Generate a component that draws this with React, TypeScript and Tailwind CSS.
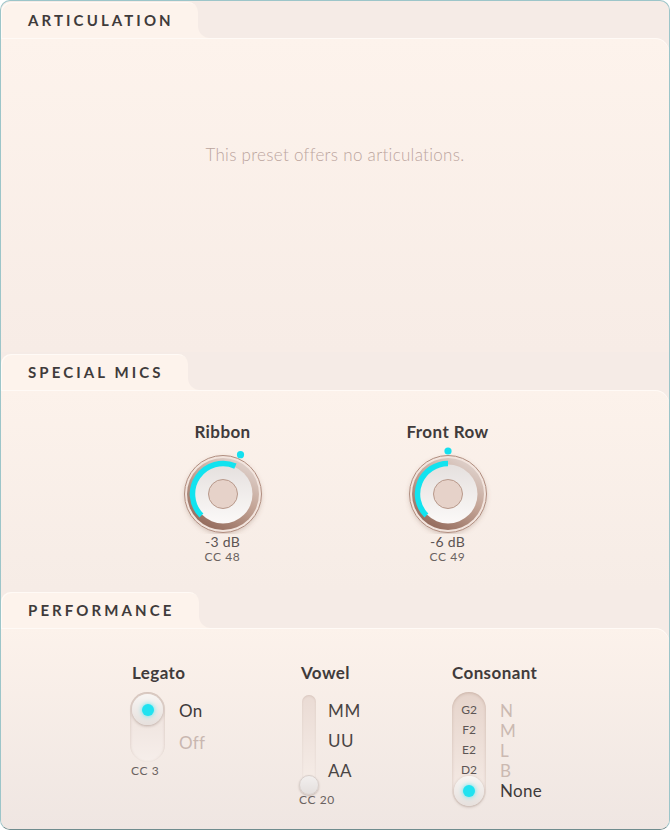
import { useId } from 'react';

const FONT = "font-['Lato',_'Noto_Sans',_sans-serif]";

function Tab({ title }: { title: string }) {
  return (
    <div className="flex items-end">
      <div className="h-[36px] rounded-t-[10px] bg-[#fdf3ec] pl-[27px] pr-[24px] flex items-center shadow-[inset_1px_1px_0_#fffaf6]">
        <span className="text-[15px] font-bold tracking-[3.1px] text-[#3f3b3b] uppercase leading-none">{title}</span>
      </div>
      <div className="w-[12px] h-[12px] bg-[#fdf3ec]">
        <div className="w-full h-full rounded-bl-[12px] bg-[#f5ebe6]" />
      </div>
    </div>
  );
}

function Knob({ label, value, cc, angle }: { label: string; value: string; cc: string; angle: number }) {
  const id = useId().replace(/:/g, '');
  const r = 30.5;
  const a0 = (-135 * Math.PI) / 180;
  const a1 = (angle * Math.PI) / 180;
  const p = (a: number, rr: number) => [rr * Math.sin(a), -rr * Math.cos(a)];
  const [sx, sy] = p(a0, r);
  const [ex, ey] = p(a1, r);
  const large = angle + 135 > 180 ? 1 : 0;
  const [dx, dy] = p(a1, 43);
  return (
    <div className="w-[96px] flex flex-col items-center">
      <div className="text-[17px] font-bold leading-[20px] tracking-[0.4px] text-[#403b3b] whitespace-nowrap">{label}</div>
      <svg width="96" height="88" viewBox="-48 -48 96 88" className="mt-[4px]">
        <defs>
          <linearGradient id={`ring${id}`} x1="0.8" y1="0" x2="0.2" y2="1">
            <stop offset="0" stopColor="#e2d6d1" />
            <stop offset="0.45" stopColor="#c4a597" />
            <stop offset="1" stopColor="#8f6556" />
          </linearGradient>
          <linearGradient id={`disc${id}`} x1="0" y1="0" x2="0" y2="1">
            <stop offset="0" stopColor="#e5e0de" />
            <stop offset="1" stopColor="#fbf9f8" />
          </linearGradient>
          <filter id={`sh${id}`} x="-30%" y="-30%" width="160%" height="160%">
            <feDropShadow dx="0" dy="2" stdDeviation="2" floodColor="#7a5345" floodOpacity="0.25" />
          </filter>
        </defs>
        <circle r="38.5" fill="#f2e4dd" stroke="#b08d7f" strokeWidth="1" filter={`url(#sh${id})`} />
        <circle r="36" fill={`url(#ring${id})`} />
        <circle r="29.5" fill={`url(#disc${id})`} />
        <path d={`M ${sx} ${sy} A ${r} ${r} 0 ${large} 1 ${ex} ${ey}`} stroke="#12e3ef" strokeWidth="5.5" fill="none" />
        <circle r="14.5" fill="#e6d2c9" stroke="#b8998b" strokeWidth="1" />
        <circle cx={dx} cy={dy} r="3.6" fill="#14e0ef" />
      </svg>
      <div className="text-[14px] leading-[16px] tracking-[0.3px] text-[#5d5453]">{value}</div>
      <div className="text-[12px] leading-[14px] tracking-[0.6px] text-[#6a6260]">{cc}</div>
    </div>
  );
}

function Dot() {
  return <div className="w-[12px] h-[12px] rounded-full bg-[#20e2f0] shadow-[0_0_5px_#4ce8f3]" />;
}

export default function App() {
  return (
    <div className={`${FONT} w-[670px] h-[830px] bg-white`}>
      <div className="w-[670px] h-[830px] rounded-[10px] border border-[#9cc5c9] border-b-[#6f8c8e] bg-[#f5ebe6] overflow-hidden flex flex-col pt-px">
        {/* Articulation */}
        <Tab title="Articulation" />
        <div className="h-[314px] rounded-tr-[14px] bg-gradient-to-b from-[#fdf3ec] to-[#f7ece6] shadow-[inset_0_1px_0_#fffaf6] flex justify-center pt-[107px]">
          <p className="text-[17px] leading-[20px] font-light tracking-[0.3px] text-[#bca59e]">
            This preset offers no articulations.
          </p>
        </div>

        {/* Special mics */}
        <div className="mt-[2px]">
          <Tab title="Special Mics" />
        </div>
        <div className="h-[200px] rounded-tr-[14px] bg-gradient-to-b from-[#fcf2eb] to-[#f6ece6] shadow-[inset_0_1px_0_#fffaf6] flex justify-center gap-[129px] pt-[32px]">
          <Knob label="Ribbon" value="-3 dB" cc="CC 48" angle={24} />
          <Knob label="Front Row" value="-6 dB" cc="CC 49" angle={0} />
        </div>

        {/* Performance */}
        <div className="mt-[2px]">
          <Tab title="Performance" />
        </div>
        <div className="flex-1 rounded-tr-[14px] bg-gradient-to-b from-[#fcf2eb] to-[#efe6e2] shadow-[inset_0_1px_0_#fffaf6] flex pl-[129px] pt-[35px]">
          {/* Legato */}
          <div className="w-[169px] flex flex-col items-start">
            <div className="text-[17px] font-bold leading-[20px] tracking-[0.4px] text-[#403b3b] pl-[2px]">Legato</div>
            <div className="flex mt-[9px]">
              <div className="w-[35px] h-[70px] rounded-full bg-gradient-to-b from-[#ece0da] to-[#f6eeea] shadow-[inset_0_1px_3px_rgba(120,80,60,0.25)] p-[2px]">
                <div className="w-[31px] h-[31px] rounded-full bg-gradient-to-b from-[#f8f5f3] to-[#e6e0dd] shadow-[0_1px_3px_rgba(90,60,50,0.35)] flex items-center justify-center">
                  <Dot />
                </div>
              </div>
              <div className="ml-[14px] mt-[3px] text-[17px] leading-[32px] tracking-[0.3px]">
                <div className="text-[#3e3a3a]">On</div>
                <div className="text-[#c9b7b0]">Off</div>
              </div>
            </div>
            <div className="text-[12px] leading-[14px] tracking-[0.6px] text-[#6a6260] mt-[2px] pl-px">CC 3</div>
          </div>

          {/* Vowel */}
          <div className="w-[153px] flex flex-col items-start">
            <div className="text-[17px] font-bold leading-[20px] tracking-[0.4px] text-[#403b3b] pl-[2px]">Vowel</div>
            <div className="flex mt-[12px]">
              <div className="relative w-[20px] h-[100px] flex justify-center">
                <div className="w-[14px] h-full rounded-full bg-gradient-to-b from-[#eadbd4] to-[#f7efea] shadow-[inset_0_1px_2px_rgba(120,80,60,0.15)]" />
                <div className="absolute bottom-0 left-0 w-[20px] h-[20px] rounded-full bg-gradient-to-b from-[#f2efee] to-[#e4dfdd] border border-[#d8cfcb] shadow-[0_1px_2px_rgba(90,60,50,0.3)]" />
              </div>
              <div className="ml-[9px] mt-[1px] text-[17px] leading-[30px] tracking-[0.6px] text-[#4a4544]">
                <div>MM</div>
                <div>UU</div>
                <div>AA</div>
              </div>
            </div>
            <div className="text-[12px] leading-[14px] tracking-[0.6px] text-[#6a6260] -mt-[2px]">CC 20</div>
          </div>

          {/* Consonant */}
          <div className="flex flex-col items-start">
            <div className="text-[17px] font-bold leading-[20px] tracking-[0.4px] text-[#403b3b]">Consonant</div>
            <div className="flex mt-[9px]">
              <div className="w-[34px] rounded-full bg-gradient-to-b from-[#e6d4cb] to-[#f6ede8] shadow-[inset_0_1px_3px_rgba(120,80,60,0.25)] pt-[8px] pb-px px-[2px] flex flex-col items-center">
                {['G2', 'F2', 'E2', 'D2'].map((n) => (
                  <div key={n} className="text-[12px] leading-[20px] text-[#5d5554]">{n}</div>
                ))}
                <div className="-mt-[4px] w-[30px] h-[30px] rounded-full bg-gradient-to-b from-[#f8f5f3] to-[#e6e0dd] shadow-[0_1px_3px_rgba(90,60,50,0.35)] flex items-center justify-center">
                  <Dot />
                </div>
              </div>
              <div className="ml-[14px] mt-[9px] text-[17px] leading-[20px] tracking-[0.3px]">
                <div className="text-[#cbb9b1]">N</div>
                <div className="text-[#cbb9b1]">M</div>
                <div className="text-[#cbb9b1]">L</div>
                <div className="text-[#cbb9b1]">B</div>
                <div className="text-[#3e3a3a]">None</div>
              </div>
            </div>
          </div>
        </div>
      </div>
    </div>
  );
}
